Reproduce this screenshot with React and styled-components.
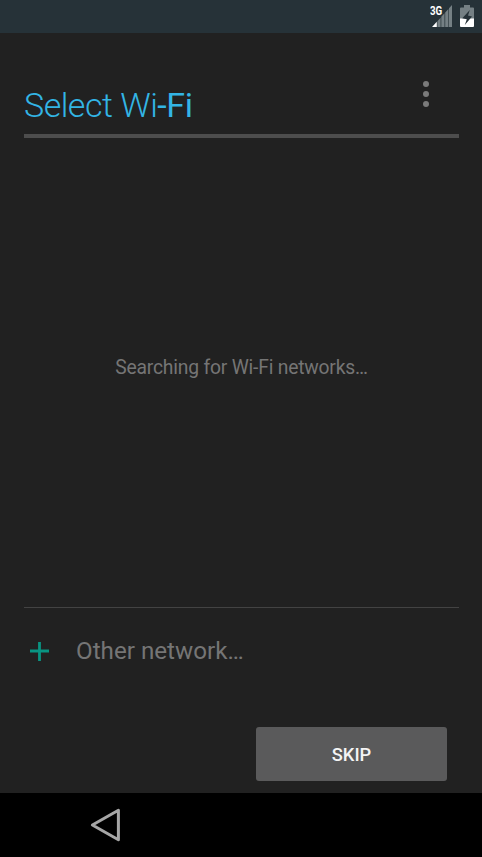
import styled, { createGlobalStyle } from 'styled-components';

export default function App() {
  return (
    <>
      <GlobalStyle />
      <Screen>
        <StatusBar>
          <SignalIcon />
          <BatteryIcon />
        </StatusBar>
        <Content>
          <Header>
            <Title>
              Select Wi<TitleStrong>-Fi</TitleStrong>
            </Title>
            <MenuButton aria-label="More options">
              <Dot />
              <Dot />
              <Dot />
            </MenuButton>
          </Header>
          <NetworkList>
            <Searching>Searching for Wi-Fi networks…</Searching>
          </NetworkList>
          <OtherNetwork>
            <PlusIcon />
            <OtherLabel>Other network…</OtherLabel>
          </OtherNetwork>
          <Footer>
            <SkipButton>SKIP</SkipButton>
          </Footer>
        </Content>
        <NavBar>
          <BackIcon />
        </NavBar>
      </Screen>
    </>
  )
}

function SignalIcon() {
  return (
    <SignalBox>
      <NetworkType>3G</NetworkType>
      <svg width="20" height="22" viewBox="0 0 20 22">
        <path d="M0 22L4.8 16.8V22Z" fill="#fff" />
        <path d="M5.4 16.2L8.6 12.7V22H5.4ZM9.3 11.8L12.5 8.3V22H9.3ZM13.2 7.5L16.4 4V22H13.2ZM17 3.3L20 0V22H17Z" fill="#758084" />
      </svg>
    </SignalBox>
  )
}

function BatteryIcon() {
  return (
    <svg width="14" height="22" viewBox="0 0 14 22">
      <path d="M4 0H10V2.5H13Q14 2.5 14 3.5V14H0V3.5Q0 2.5 1 2.5H4Z" fill="#758084" />
      <path d="M0 13.5H14V21Q14 22 13 22H1Q0 22 0 21Z" fill="#fff" />
      <path d="M9.8 5L2.3 13.2L6.8 14.3L4.8 20L12 11.6L8 10.4Z" fill="#263238" />
    </svg>
  )
}

function PlusIcon() {
  return (
    <svg width="19" height="19" viewBox="0 0 19 19">
      <path d="M0 9H19M9.5 0V19" stroke="#099482" strokeWidth="2.8" />
    </svg>
  )
}

function BackIcon() {
  return (
    <svg width="32" height="34" viewBox="0 0 32 34">
      <path d="M28.4 2.2V31.8L2.4 17Z" fill="none" stroke="#a6a6a6" strokeWidth="3" strokeLinejoin="round" />
    </svg>
  )
}

const GlobalStyle = createGlobalStyle`
    body {
      margin: 0;
      background: #212121;
    }
    * {
      box-sizing: border-box;
    }
`;

const Screen = styled.div`
    display: flex;
    flex-direction: column;
    width: 482px;
    height: 857px;
    overflow: hidden;
    background: #212121;
    font-family: Roboto, sans-serif;
`;

const StatusBar = styled.div`
    display: flex;
    justify-content: flex-end;
    gap: 8px;
    height: 33px;
    padding: 5px 8px 0 0;
    background: #263238;
`;

const SignalBox = styled.div`
    position: relative;
    width: 20px;
    height: 22px;
`;

const NetworkType = styled.span`
    position: absolute;
    top: 0;
    left: -2px;
    color: #fff;
    font-size: 13px;
    font-weight: 700;
    line-height: 12px;
    transform: scaleX(0.75);
    transform-origin: left;
`;

const Content = styled.main`
    display: flex;
    flex-direction: column;
    flex: 1;
    padding: 0 23px 0 24px;
`;

const Header = styled.header`
    display: flex;
    justify-content: space-between;
    height: 105px;
    padding: 47px 30px 0 0;
    border-bottom: 4px solid #4d4d4d;
`;

const Title = styled.h1`
    margin: 5px 0 0;
    color: #33b5e5;
    font-size: 34px;
    font-weight: 300;
    line-height: 40px;
    letter-spacing: -0.5px;
    white-space: nowrap;
`;

const TitleStrong = styled.span`
    font-weight: 400;
    letter-spacing: -0.4px;
`;

const MenuButton = styled.button`
    display: flex;
    flex-direction: column;
    gap: 4px;
    height: 27px;
    margin: 1px 0 0;
    padding: 0;
    border: 0;
    background: none;
`;

const Dot = styled.span`
    width: 6px;
    height: 6px;
    border-radius: 50%;
    background: #7a7a7a;
`;

const NetworkList = styled.section`
    display: flex;
    justify-content: center;
    height: 470px;
    padding-top: 217px;
    border-bottom: 1px solid #434343;
`;

const Searching = styled.p`
    margin: 0;
    color: #757575;
    font-size: 19.3px;
    line-height: 25px;
    letter-spacing: -0.2px;
`;

const OtherNetwork = styled.div`
    display: flex;
    align-items: center;
    gap: 27px;
    height: 86px;
    padding-left: 6px;
`;

const OtherLabel = styled.span`
    color: #757575;
    font-size: 24.2px;
    line-height: 30px;
`;

const Footer = styled.footer`
    display: flex;
    justify-content: flex-end;
    padding: 33px 12px 0 0;
`;

const SkipButton = styled.button`
    width: 191px;
    height: 54px;
    padding: 1px 0 0;
    border: 0;
    border-radius: 3px;
    background: #5a5a5b;
    color: #f4f4f4;
    font-family: inherit;
    font-size: 18.3px;
    font-weight: 500;
`;

const NavBar = styled.nav`
    height: 64px;
    padding: 15px 0 0 90px;
    background: #000;
`;
